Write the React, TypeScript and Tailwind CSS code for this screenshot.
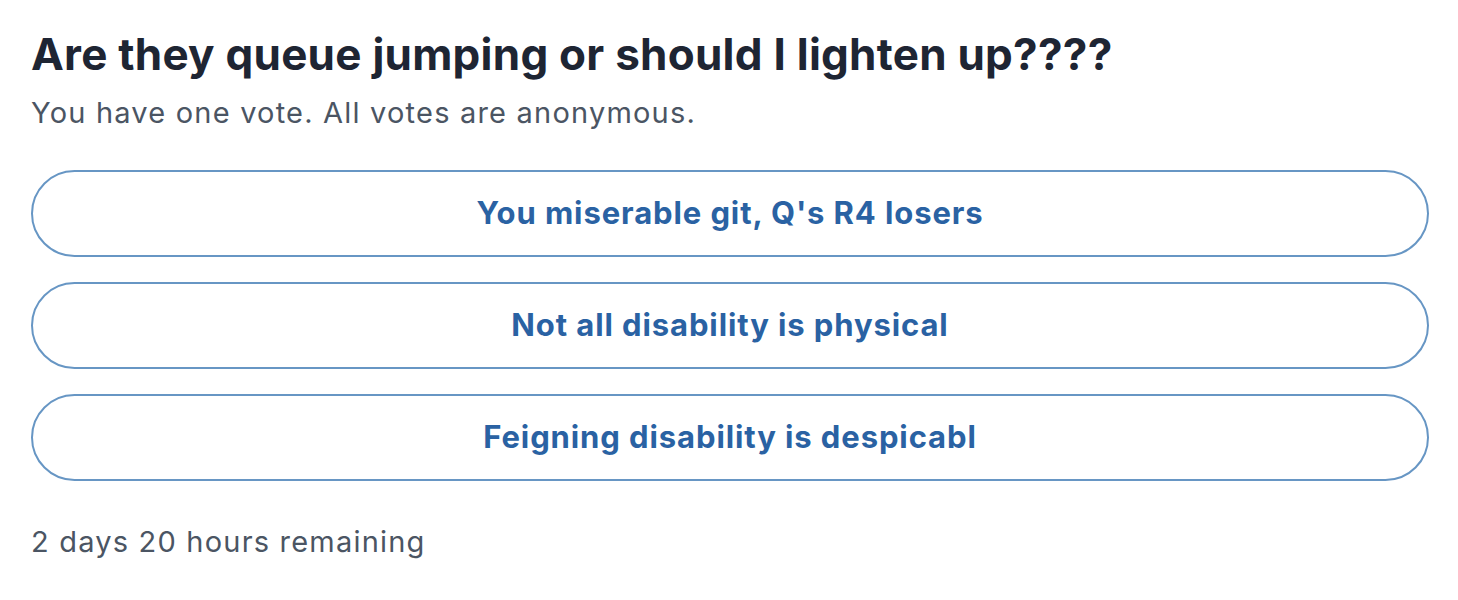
const options = [
  "You miserable git, Q's R4 losers",
  "Not all disability is physical",
  "Feigning disability is despicabl",
];

export default function App() {
  return (
    <div className="min-h-[600px] w-[1458px] bg-white font-['Inter',sans-serif]">
      <div className="pl-[31px] pt-[27px]">
        <h1 className="text-[44px] leading-[54px] font-bold tracking-[0.25px] text-[#1e2533]">
          Are they queue jumping or should I lighten up????
        </h1>
        <p className="mt-[14px] text-[29px] leading-[36px] tracking-[1.2px] text-[#4b5563]">
          You have one vote. All votes are anonymous.
        </p>
        <div className="mt-[39px] flex w-[1398px] flex-col gap-[25px]">
          {options.map((o) => (
            <button
              key={o}
              className="flex h-[87px] w-full items-center justify-center rounded-full border-2 border-[#6796c4] bg-white text-[31px] font-bold tracking-[0.9px] text-[#2a62a3]"
            >
              {o}
            </button>
          ))}
        </div>
        <p className="mt-[43px] text-[29px] leading-[36px] tracking-[1.2px] text-[#4b5563]">
          2 days 20 hours remaining
        </p>
      </div>
    </div>
  );
}
